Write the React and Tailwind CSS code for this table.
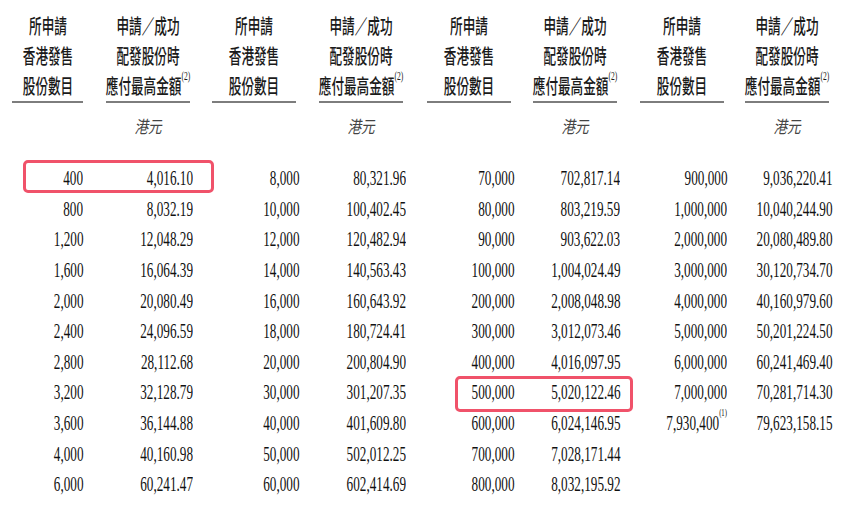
import React from "react";

const cjk = { fontFamily: '"Noto Sans CJK TC", "Noto Sans CJK SC", sans-serif' };
const serif = { fontFamily: '"Liberation Serif", "Times New Roman", serif' };

const data = [
  [
    ["400", "4,016.10"], ["800", "8,032.19"], ["1,200", "12,048.29"], ["1,600", "16,064.39"],
    ["2,000", "20,080.49"], ["2,400", "24,096.59"], ["2,800", "28,112.68"], ["3,200", "32,128.79"],
    ["3,600", "36,144.88"], ["4,000", "40,160.98"], ["6,000", "60,241.47"],
  ],
  [
    ["8,000", "80,321.96"], ["10,000", "100,402.45"], ["12,000", "120,482.94"], ["14,000", "140,563.43"],
    ["16,000", "160,643.92"], ["18,000", "180,724.41"], ["20,000", "200,804.90"], ["30,000", "301,207.35"],
    ["40,000", "401,609.80"], ["50,000", "502,012.25"], ["60,000", "602,414.69"],
  ],
  [
    ["70,000", "702,817.14"], ["80,000", "803,219.59"], ["90,000", "903,622.03"], ["100,000", "1,004,024.49"],
    ["200,000", "2,008,048.98"], ["300,000", "3,012,073.46"], ["400,000", "4,016,097.95"], ["500,000", "5,020,122.46"],
    ["600,000", "6,024,146.95"], ["700,000", "7,028,171.44"], ["800,000", "8,032,195.92"],
  ],
  [
    ["900,000", "9,036,220.41"], ["1,000,000", "10,040,244.90"], ["2,000,000", "20,080,489.80"],
    ["3,000,000", "30,120,734.70"], ["4,000,000", "40,160,979.60"], ["5,000,000", "50,201,224.50"],
    ["6,000,000", "60,241,469.40"], ["7,000,000", "70,281,714.30"], ["7,930,400", "79,623,158.15", "(1)"],
  ],
];

function HeadLine({ children }) {
  return (
    <div className="h-[30px] flex items-center justify-center">
      <span
        className="inline-block whitespace-nowrap text-[20px] font-medium leading-none text-[#1a1a1a] scale-x-[0.63] origin-center"
        style={cjk}
      >
        {children}
      </span>
    </div>
  );
}

function Header({ amount, first }) {
  const lines = amount
    ? ["申請／成功", "配發股份時", "應付最高金額"]
    : ["所申請", "香港發售", "股份數目"];
  return (
    <div className={`flex flex-col items-end ${first ? "" : "pr-[3px]"}`}>
      <div className={`${first ? "w-[71px]" : "w-[84px]"} pt-[11px] border-b-2 border-[#7d7d7d]`}>
        {lines.map((l, i) => (
          <HeadLine key={i}>
            {l}
            {amount && i === 2 ? (
              <sup className="text-[12px] font-normal align-super" style={serif}>(2)</sup>
            ) : null}
          </HeadLine>
        ))}
      </div>
      {amount ? (
        <div className="w-[84px] mt-[7px] h-[30px] flex items-center justify-center">
          <span
            className="inline-block italic text-[17px] leading-none text-[#444] scale-x-[0.8] origin-center"
            style={cjk}
          >
            港元
          </span>
        </div>
      ) : null}
    </div>
  );
}

function Num({ value, sup }) {
  return (
    <div className="h-[30.6px] flex items-center justify-end">
      <span
        className="inline-block whitespace-nowrap text-[22px] leading-none text-[#111] scale-x-[0.6] origin-right"
        style={serif}
      >
        {value}
        {sup ? <sup className="text-[11px] align-super">{sup}</sup> : null}
      </span>
    </div>
  );
}

export default function App() {
  const rows = Array.from({ length: 11 }, (_, r) => r);
  return (
    <div className="relative w-[844px] h-[508px] bg-white overflow-hidden">
      <div className="grid grid-cols-[83px_110px_106px_107px_108px_106px_107px_105px]">
        {[0, 1, 2, 3].map((g) => (
          <React.Fragment key={g}>
            <Header amount={false} first={g === 0} />
            <Header amount={true} />
          </React.Fragment>
        ))}
      </div>
      <div className="mt-[23px] grid grid-cols-[83px_110px_106px_107px_108px_106px_107px_105px]">
        {rows.map((r) => (
          <React.Fragment key={r}>
            {data.map((group, g) => {
              const row = group[r];
              return (
                <React.Fragment key={g}>
                  {row ? <Num value={row[0]} sup={row[2]} /> : <div className="h-[30.6px]" />}
                  {row ? <Num value={row[1]} /> : <div className="h-[30.6px]" />}
                </React.Fragment>
              );
            })}
          </React.Fragment>
        ))}
      </div>
      <div className="absolute left-[23px] top-[160px] w-[191px] h-[33px] border-[3px] border-[#f0526a] rounded-[5px]" />
      <div className="absolute left-[455px] top-[376px] w-[178px] h-[36px] border-[3px] border-[#f0526a] rounded-[5px]" />
    </div>
  );
}
